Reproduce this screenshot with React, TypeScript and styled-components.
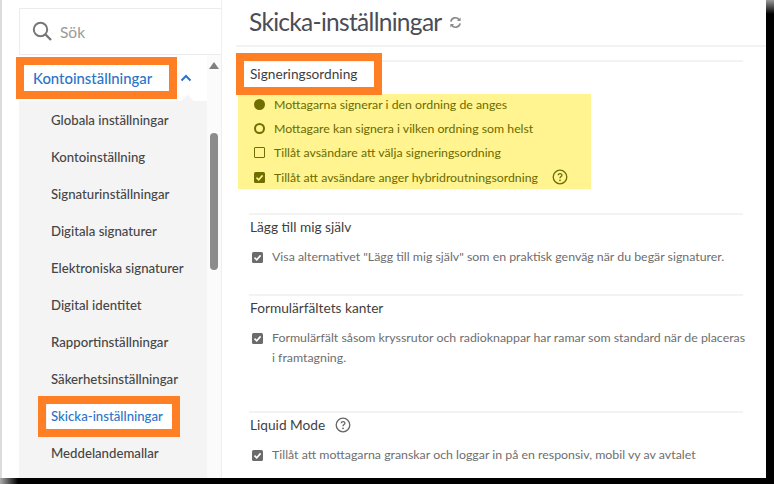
import React from "react";
import styled, { createGlobalStyle } from "styled-components";

const Global = createGlobalStyle`
  html, body { margin: 0; padding: 0; background: #000; }
  body { width: 774px; height: 484px; overflow: hidden; font-family: "Lato", "Liberation Sans", sans-serif; }
  * { box-sizing: border-box; }
`;

const Frame = styled.div`
  width: 774px; height: 484px; position: relative; overflow: hidden;
  background:
    linear-gradient(to right, #aaa, #000 18px) 0 100% / 40px 6px no-repeat,
    linear-gradient(to bottom, #999, #000 14px) 100% 0 / 8px 30px no-repeat,
    #000;
`;
const Page = styled.div`
  width: 766px; height: 478px; background: #fff; display: flex; overflow: hidden;
  border-left: 2px solid #dcdcdc; padding-left: 17px;
`;
const Sidebar = styled.aside`
  width: 203px; flex: none; padding-top: 8px; display: flex; flex-direction: column;
  border-right: 1px solid #eeeeee;
`;
const Search = styled.div`
  height: 47px; border: 1px solid #ececec; border-right: 0; display: flex; align-items: center; gap: 7px; padding-left: 12px;
  color: #9a9a9a; font-size: 15.5px;
`;
const Menu = styled.div`flex: 1; display: flex; min-height: 0;`;
const MenuBody = styled.div`width: 188px; flex: none; background: #f4f4f4; display: flex; flex-direction: column;`;
const MenuHead = styled.div`
  height: 46px; flex: none; background: #fff; display: flex; align-items: center; justify-content: space-between;
  padding: 0 15px 0 14px; color: #2b74c8; font-size: 14.9px; font-weight: 500; position: relative;
  &::after {
    content: ""; position: absolute; right: 14px; bottom: -1px; width: 11px; height: 11px;
    background: #f4f4f4; transform: translateY(6px) rotate(45deg);
  }
`;
const Items = styled.div`display: flex; flex-direction: column; padding: 0 0 0 32px;`;
const Item = styled.div<{ $active?: boolean }>`
  height: 37px; flex: none; display: flex; align-items: center; font-size: 13.2px; font-weight: 500;
  color: ${(p) => (p.$active ? "#2b74c8" : "#454545")};
`;
const ActiveLabel = styled.span`
  background: #fff; height: 26px; width: 125px; margin-left: -4px; padding-left: 4px;
  display: flex; align-items: center;
`;
const Track = styled.div`
  width: 14px; flex: none; display: flex; flex-direction: column; align-items: center; padding-top: 7px; background: #fbfbfb;
`;
const ArrowUp = styled.div`
  width: 0; height: 0; border-left: 5px solid transparent; border-right: 5px solid transparent;
  border-bottom: 7px solid #808080;
`;
const Thumb = styled.div`
  width: 8px; height: 137px; margin-top: 64px; border-radius: 4px; background: #8c8c8c;
`;
const Main = styled.main`flex: 1; min-width: 0; padding-left: 14px; display: flex; flex-direction: column;`;
const TitleRow = styled.div`
  height: 47px; flex: none; display: flex; align-items: center; gap: 7px;
  border-bottom: 2px solid #f3f3f3; padding-left: 13px;
`;
const Title = styled.h1`margin: 0; font-size: 24.5px; font-weight: 400; color: #4a4d55; line-height: 1; letter-spacing: -0.7px;`;
const Content = styled.div`width: 494px; margin-left: 13px; padding-top: 13px;`;
const Section = styled.section<{ $h: number }>`
  height: ${(p) => p.$h}px; border-top: 2px solid #f3f3f3; padding-top: 2px;
`;
const Heading = styled.h2`
  margin: 0; padding-left: 1px; font-size: 13.7px; font-weight: 400; color: #3f3f3f; line-height: 20px;
  display: flex; align-items: center; gap: 10px;
`;
const Highlight = styled.div`
  width: 353px; margin: 10px 0 0 -11px; height: 95px; background: #fff48f; display: flex; flex-direction: column; gap: 4.4px;
  padding-left: 15px; color: #6b6b00;
`;
const HighRow = styled.div`height: 20px; display: flex; align-items: center; gap: 9px; font-size: 12.3px;`;
const Control = styled.span`width: 12px; flex: none; display: flex; justify-content: center; align-items: center;`;
const Dot = styled.span<{ $filled?: boolean }>`
  width: 11px; height: 11px; border-radius: 50%; border: 2px solid #6f6f00;
  background: ${(p) => (p.$filled ? "#6f6f00" : "transparent")};
`;
const Box = styled.span`width: 11px; height: 11px; border: 1.5px solid #6f6f00; border-radius: 1px;`;
const HelpSlot = styled.span`display: flex; margin-left: 5px;`;
const Option = styled.div`
  display: flex; gap: 9px; margin: 10px -8px 0 3px; font-size: 12.35px; line-height: 20px; color: #6e6e6e;
`;
const CheckSlot = styled.span`display: flex; flex: none; height: 20px; align-items: center;`;
const Check = styled.svg`width: 11px; height: 11px; flex: none; display: block;`;
const Callout = styled.div<{ $x: number; $y: number; $w: number; $h: number }>`
  position: absolute; left: ${(p) => p.$x}px; top: ${(p) => p.$y}px; width: ${(p) => p.$w}px; height: ${(p) => p.$h}px;
  border: 8px solid #ff7f24;
`;

const Tick = ({ color = "#6b6b6b", mark = "#fff" }: { color?: string; mark?: string }) => (
  <Check viewBox="0 0 11 11">
    <rect width="11" height="11" rx="1.5" fill={color} />
    <path d="M2.5 5.6 4.7 7.8 8.6 3.4" fill="none" stroke={mark} strokeWidth="1.6" />
  </Check>
);
const Help = ({ color }: { color: string }) => (
  <svg width="16" height="16" viewBox="0 0 16 16" fill="none">
    <circle cx="8" cy="8" r="6.8" stroke={color} strokeWidth="1.3" />
    <path d="M6.2 6.3c0-2.3 3.7-2.3 3.7-.1 0 1.4-1.9 1.4-1.9 3" stroke={color} strokeWidth="1.3" />
    <circle cx="8" cy="11.3" r=".9" fill={color} />
  </svg>
);

const items = ["Globala inställningar","Kontoinställning","Signaturinställningar","Digitala signaturer","Elektroniska signaturer","Digital identitet","Rapportinställningar","Säkerhetsinställningar","Skicka-inställningar","Meddelandemallar"];

export default function App() {
  return (
    <Frame>
      <Global />
      <Page>
        <Sidebar>
          <Search>
            <svg width="21" height="21" viewBox="0 0 21 21" fill="none">
              <circle cx="8.5" cy="8.5" r="6.7" stroke="#777" strokeWidth="2" />
              <path d="M13.5 13.5 19 19" stroke="#777" strokeWidth="2.4" />
            </svg>
            Sök
          </Search>
          <Menu>
            <MenuBody>
              <MenuHead>
                Kontoinställningar
                <svg width="12" height="8" viewBox="0 0 12 8" fill="none">
                  <path d="M1.5 6.5 6 2l4.5 4.5" stroke="#2b74c8" strokeWidth="2" />
                </svg>
              </MenuHead>
              <Items>
                {items.map((t) => (
                  <Item key={t} $active={t === "Skicka-inställningar"}>
                    {t === "Skicka-inställningar" ? <ActiveLabel>{t}</ActiveLabel> : t}
                  </Item>
                ))}
              </Items>
            </MenuBody>
            <Track><ArrowUp /><Thumb /></Track>
          </Menu>
        </Sidebar>
        <Main>
          <TitleRow>
            <Title>Skicka-inställningar</Title>
            <svg width="13" height="13" viewBox="0 0 14 14" fill="none">
              <path d="M2 6a5 5 0 0 1 9-2M12 8a5 5 0 0 1-9 2" stroke="#8a8a8a" strokeWidth="1.8" />
              <path d="M12.5 1.5v4h-4zM1.5 12.5v-4h4z" fill="#8a8a8a" />
            </svg>
          </TitleRow>
          <Content>
            <Section $h={153}>
              <Heading>Signeringsordning</Heading>
              <Highlight>
                <HighRow><Control><Dot $filled /></Control>Mottagarna signerar i den ordning de anges</HighRow>
                <HighRow><Control><Dot /></Control>Mottagare kan signera i vilken ordning som helst</HighRow>
                <HighRow><Control><Box /></Control>Tillåt avsändare att välja signeringsordning</HighRow>
                <HighRow><Control><Tick color="#6f6f00" mark="#fff48f" /></Control>Tillåt att avsändare anger hybridroutningsordning<HelpSlot><Help color="#6f6f00" /></HelpSlot></HighRow>
              </Highlight>
            </Section>
            <Section $h={81}>
              <Heading>Lägg till mig själv</Heading>
              <Option><CheckSlot><Tick /></CheckSlot>Visa alternativet "Lägg till mig själv" som en praktisk genväg när du begär signaturer.</Option>
            </Section>
            <Section $h={117}>
              <Heading>Formulärfältets kanter</Heading>
              <Option><CheckSlot><Tick /></CheckSlot>Formulärfält såsom kryssrutor och radioknappar har ramar som standard när de placeras i framtagning.</Option>
            </Section>
            <Section $h={66}>
              <Heading>Liquid Mode <Help color="#666" /></Heading>
              <Option><CheckSlot><Tick /></CheckSlot>Tillåt att mottagarna granskar och loggar in på en responsiv, mobil vy av avtalet</Option>
            </Section>
          </Content>
        </Main>
      </Page>
      <Callout $x={16} $y={57} $w={161} $h={42} />
      <Callout $x={38} $y={396} $w={142} $h={41} />
      <Callout $x={236} $y={53} $w={146} $h={42} />
    </Frame>
  );
}
